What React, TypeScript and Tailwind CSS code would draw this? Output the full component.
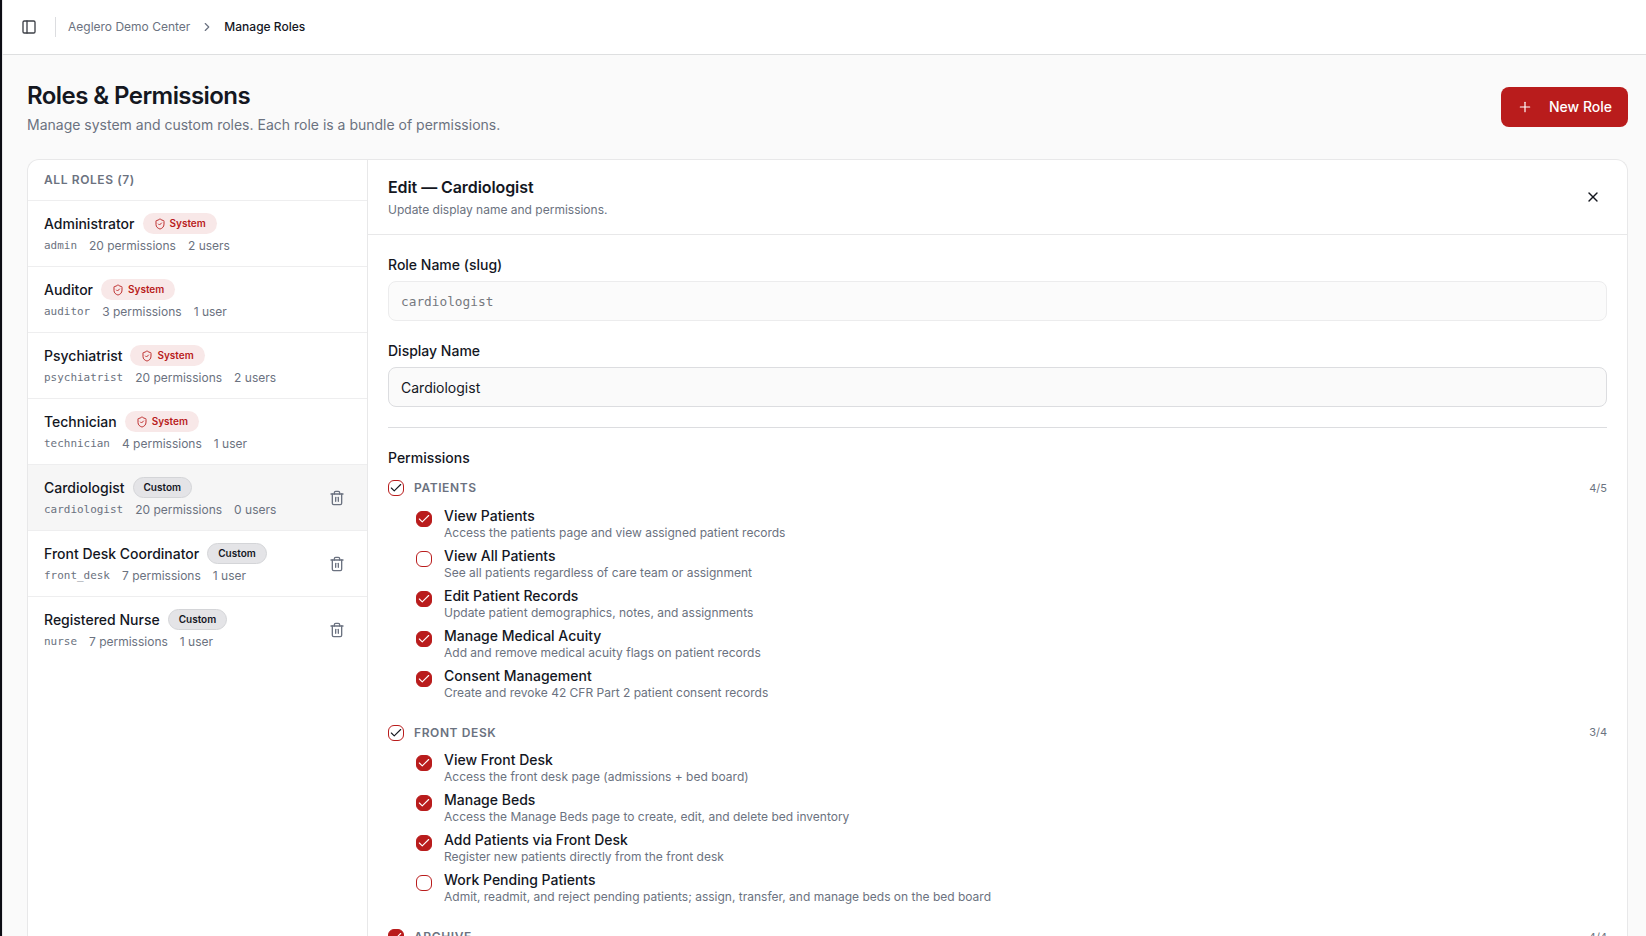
import { Check, ChevronRight, PanelLeft, Plus, ShieldCheck, X } from "lucide-react";
import { clsx } from "clsx";

interface Role {
  name: string;
  slug: string;
  permissions: number;
  users: number;
  system?: boolean;
}

interface Permission {
  label: string;
  description: string;
  checked: boolean;
}

interface PermissionGroup {
  title: string;
  count: string;
  state: "partial" | "all";
  items: Permission[];
}

const ROLES: Role[] = [
  { name: "Administrator", slug: "admin", permissions: 20, users: 2, system: true },
  { name: "Auditor", slug: "auditor", permissions: 3, users: 1, system: true },
  { name: "Psychiatrist", slug: "psychiatrist", permissions: 20, users: 2, system: true },
  { name: "Technician", slug: "technician", permissions: 4, users: 1, system: true },
  { name: "Cardiologist", slug: "cardiologist", permissions: 20, users: 0 },
  { name: "Front Desk Coordinator", slug: "front_desk", permissions: 7, users: 1 },
  { name: "Registered Nurse", slug: "nurse", permissions: 7, users: 1 },
];

const GROUPS: PermissionGroup[] = [
  {
    title: "Patients",
    count: "4/5",
    state: "partial",
    items: [
      { label: "View Patients", description: "Access the patients page and view assigned patient records", checked: true },
      { label: "View All Patients", description: "See all patients regardless of care team or assignment", checked: false },
      { label: "Edit Patient Records", description: "Update patient demographics, notes, and assignments", checked: true },
      { label: "Manage Medical Acuity", description: "Add and remove medical acuity flags on patient records", checked: true },
      { label: "Consent Management", description: "Create and revoke 42 CFR Part 2 patient consent records", checked: true },
    ],
  },
  {
    title: "Front Desk",
    count: "3/4",
    state: "partial",
    items: [
      { label: "View Front Desk", description: "Access the front desk page (admissions + bed board)", checked: true },
      { label: "Manage Beds", description: "Access the Manage Beds page to create, edit, and delete bed inventory", checked: true },
      { label: "Add Patients via Front Desk", description: "Register new patients directly from the front desk", checked: true },
      { label: "Work Pending Patients", description: "Admit, readmit, and reject pending patients; assign, transfer, and manage beds on the bed board", checked: false },
    ],
  },
  { title: "Archive", count: "4/4", state: "all", items: [] },
];

function TrashIcon() {
  return (
    <svg
      className="size-4"
      viewBox="0 0 24 24"
      fill="none"
      stroke="currentColor"
      strokeWidth="2"
      strokeLinecap="round"
      strokeLinejoin="round"
    >
      <path d="M3 6h18" />
      <path d="M19 6v14c0 1-1 2-2 2H7c-1 0-2-1-2-2V6" />
      <path d="M8 6V4c0-1 1-2 2-2h4c1 0 2 1 2 2v2" />
      <path d="M10 11v6" />
      <path d="M14 11v6" />
    </svg>
  );
}

function Checkbox({ state }: { state: "on" | "off" | "partial" }) {
  return (
    <span
      className={clsx(
        "flex size-4 shrink-0 items-center justify-center rounded-[6px] border border-[#b91c1c]",
        state === "on" && "bg-[#b91c1c] text-white",
        state === "partial" && "text-[#14171f]"
      )}
    >
      {state !== "off" && <Check className="size-3.5 shrink-0" strokeWidth={1.9} />}
    </span>
  );
}

function RoleBadge({ system }: { system?: boolean }) {
  if (system) {
    return (
      <span className="flex h-[21px] items-center gap-1 rounded-full bg-[#f8e8e8] px-[11px] text-[10px] font-semibold text-[#b91c1c]">
        <ShieldCheck className="size-3 opacity-90" />
        System
      </span>
    );
  }
  return (
    <span className="flex h-[21px] items-center rounded-full border border-[#d4d5d8] bg-[#e4e4e7] px-2.5 text-[10px] font-semibold text-[#14171f]">
      Custom
    </span>
  );
}

function RoleRow({ role, selected, last }: { role: Role; selected: boolean; last: boolean }) {
  return (
    <li
      className={clsx(
        "flex h-[66px] items-center justify-between border-b pr-[22px] pl-4",
        selected && "bg-[#f6f6f6]",
        last ? "border-transparent" : "border-[#eeeeef]"
      )}
    >
      <div className="pt-0.5">
        <div className="flex h-[21px] items-center gap-2">
          <span className="text-sm font-medium">{role.name}</span>
          <RoleBadge system={role.system} />
        </div>
        <div className="mt-0.5 flex h-5 items-center gap-3 text-xs text-[#6b7280]">
          <span className="pt-px font-['DejaVu_Sans_Mono',monospace] text-[10.96px]">{role.slug}</span>
          <span>{role.permissions} permissions</span>
          <span>
            {role.users} {role.users === 1 ? "user" : "users"}
          </span>
        </div>
      </div>
      {!role.system && (
        <button className="text-[#6b7280]" aria-label={`Delete ${role.name}`}>
          <TrashIcon />
        </button>
      )}
    </li>
  );
}

function PermissionSection({ group }: { group: PermissionGroup }) {
  return (
    <section className="mb-[18px]">
      <div className="flex h-4 items-center gap-2.5">
        <Checkbox state={group.state === "all" ? "on" : "partial"} />
        <h3 className="flex-1 text-xs font-semibold tracking-[0.6px] text-[#6b7280] uppercase">
          {group.title}
        </h3>
        <span className="text-[11px] text-[#6b7280]">{group.count}</span>
      </div>
      <ul className="mt-[10.6px] pl-7">
        {group.items.map((item) => (
          <li key={item.label} className="flex h-10 gap-3">
            <div className="pt-1">
              <Checkbox state={item.checked ? "on" : "off"} />
            </div>
            <div>
              <p className="text-sm leading-[18px] font-medium">{item.label}</p>
              <p className="text-xs leading-4 text-[#6b7280]">{item.description}</p>
            </div>
          </li>
        ))}
      </ul>
    </section>
  );
}

export default function App() {
  return (
    <div className="flex h-[936px] w-full flex-col overflow-hidden border-l-2 border-[#0c0d14] bg-[#fafafa] font-['Inter',sans-serif] text-[#14171f]">
      <header className="flex h-[55px] shrink-0 items-center border-b border-l border-b-[#dedfe0] border-l-[#e8e8e9] bg-white pl-[18px] text-xs">
        <PanelLeft className="size-4 text-[#3d4047]" />
        <div className="ml-[18px] h-5 w-px bg-[#dcdde0]" />
        <span className="ml-3 text-[#6b7280]">Aeglero Demo Center</span>
        <ChevronRight className="mx-2.5 size-3.5 text-[#6b7280]" />
        <span className="font-medium">Manage Roles</span>
      </header>

      <main className="flex min-h-0 flex-1 flex-col border-l border-[#e8e8e9] pr-[18px] pl-6">
        <div className="flex h-[104px] shrink-0 items-center justify-between">
          <div>
            <h1 className="pt-px text-2xl leading-[31px] font-semibold tracking-[-0.57px]">
              Roles &amp; Permissions
            </h1>
            <p className="mt-1 text-sm leading-5 text-[#6b7280]">
              Manage system and custom roles. Each role is a bundle of permissions.
            </p>
          </div>
          <button className="flex h-10 w-[127px] items-center rounded-lg bg-[#b91c1c] pl-4 text-sm font-medium text-white">
            <Plus className="size-4" strokeWidth={1.8} />
            <span className="ml-4">New Role</span>
          </button>
        </div>

        <div className="flex min-h-0 flex-1 rounded-t-xl border border-b-0 border-[#e8e8e9] bg-white">
          <aside className="w-[340px] shrink-0 border-r border-[#e8e8e9]">
            <h2 className="flex h-[41px] items-center border-b border-[#eeeeef] px-4 text-xs font-semibold tracking-[0.6px] text-[#6b7280] uppercase">
              All Roles ({ROLES.length})
            </h2>
            <ul>
              {ROLES.map((role, i) => (
                <RoleRow
                  key={role.slug}
                  role={role}
                  selected={role.slug === "cardiologist"}
                  last={i === ROLES.length - 1}
                />
              ))}
            </ul>
          </aside>

          <div className="min-w-0 flex-1 overflow-hidden">
            <div className="flex h-[75px] items-center justify-between border-b border-[#e8e8e9] pr-[26px] pl-5">
              <div>
                <h2 className="text-base leading-6 font-semibold tracking-[-0.08px]">Edit — Cardiologist</h2>
                <p className="pt-px text-xs leading-5 text-[#6b7280]">Update display name and permissions.</p>
              </div>
              <button aria-label="Close">
                <X className="size-4" />
              </button>
            </div>

            <div className="px-5 pt-5">
              <label className="block text-sm font-medium">Role Name (slug)</label>
              <div className="mt-1.5 flex h-10 items-center rounded-lg border border-[#ececed] bg-[#fbfbfb] px-3 pt-0.5 font-['DejaVu_Sans_Mono',monospace] text-[12.79px] text-[#76797f]">
                cardiologist
              </div>
              <label className="mt-5 block text-sm font-medium">Display Name</label>
              <div className="mt-1.5 flex h-10 items-center rounded-lg border border-[#dcdde0] bg-[#fafafa] px-3 pt-0.5 text-sm">
                Cardiologist
              </div>
              <div className="mt-5 h-px bg-[#dcdde0]" />
              <p className="mt-5 mb-3 text-sm font-medium">Permissions</p>
              {GROUPS.map((group) => (
                <PermissionSection key={group.title} group={group} />
              ))}
            </div>
          </div>
        </div>
      </main>
    </div>
  );
}
